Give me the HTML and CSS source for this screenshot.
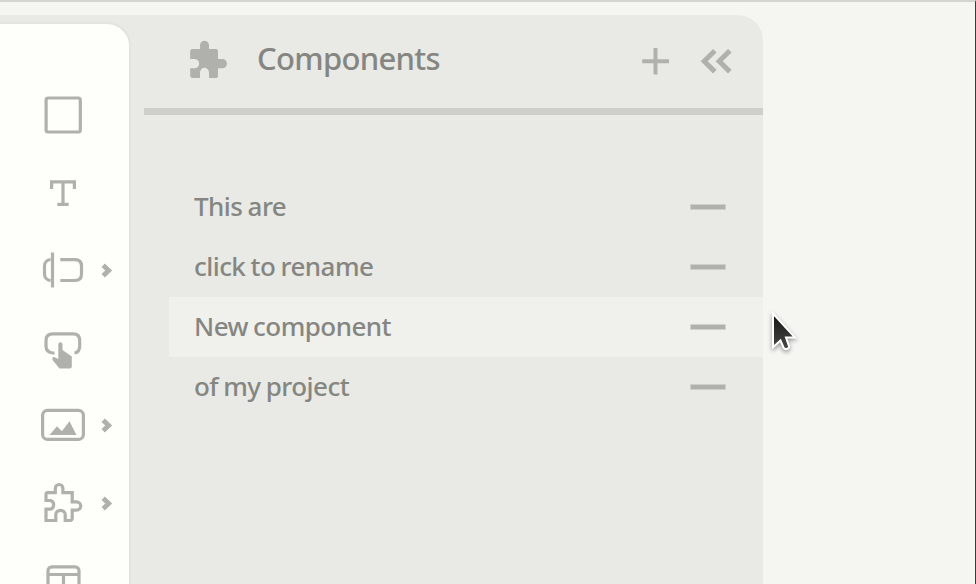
FILE: index.html
```html
<!DOCTYPE html>
<html lang="en">
<head>
<meta charset="utf-8">
<title>Components</title>
<link rel="stylesheet" href="styles.css">
</head>
<body>
<div class="app">
  <div class="panel">
    <nav class="toolbar">
      <svg class="tool" viewBox="0 76 129 78"><rect class="line" x="46.1" y="98" width="34.2" height="34" rx="2"/></svg>
      <svg class="tool" viewBox="0 154 129 78"><path class="line" d="M51.6 189V181.8H74.4V189M63 182V204.3M57.3 204.3H68.7"/></svg>
      <svg class="tool" viewBox="0 232 129 78"><path class="line" d="M52.5 252.5V287.5M50.5 259.5C47 259.8 44.5 262.500 44.500 266V274C44.500 277.500 47 280.300 50.500 280.600M60.300 259.600H75Q81.500 259.600 81.500 266V274Q81.500 280.500 75 280.500H60.300"/><path class="caret" d="M103.200 265.200L108.700 270.500L103.200 275.700"/></svg>
      <svg class="tool" viewBox="0 310 129 78"><path class="line" d="M54.500 353H53Q46 352.500 46 346V340.500Q46 333.800 53 333.800H73Q79.700 333.800 79.700 340.500V346Q79.700 352.300 74.500 353"/><path class="solid" d="M58.300 344.500Q58.300 342.200 60.400 342.200T62.500 344.500V350L71.800 356.500V366.500Q71.800 368.500 69.800 368.500H59.500L52.500 360Q51.700 357.600 53.500 356.700L58.300 359Z"/></svg>
      <svg class="tool" viewBox="0 388 129 78"><rect class="line" x="42.600" y="410.400" width="40.800" height="29" rx="5"/><path class="solid" d="M49.500 435L57 426.300L61.800 431.300L69.500 421.200L76.500 435Z"/><path class="caret" d="M103.200 420.200L108.700 425.500L103.200 430.700"/></svg>
      <svg class="tool" viewBox="0 466 129 78"><path class="line" d="M47.500 492.700H55.300V488.500A3.800 4 0 0 1 62.900 488.500V492.700H72.200V501.800H76.500A4.300 4.200 0 0 1 76.500 510.200H72.200V518Q72.200 520.500 70 520.500H65.200V514.500A4.700 4.200 0 0 0 55.800 514.500V520.500H46V509.200H50.500A4.300 4.500 0 0 0 50.500 500.500H46V495Q46 492.700 47.500 492.700Z"/><path class="caret" d="M103.200 498.300L108.700 503.600L103.200 508.800"/></svg>
      <svg class="tool" viewBox="0 544 129 78"><path class="line" d="M48 574.500H79M63.500 574.500V598"/><rect class="line" x="48" y="566.800" width="31" height="32" rx="4"/></svg>
    </nav>
    <section class="components">
      <header class="head">
        <svg class="puzzle" viewBox="190 40 38 39"><path class="solid" d="M192.500 49H200V45.500A4.500 4.800 0 0 1 209 45.500V49H216Q218 49 218 51V59H222.300A4.600 4.600 0 0 1 222.300 68.300H218V76Q218 78 216 78H209V72.500A4.500 4.700 0 0 0 200 72.500V78H192.500Q190.200 78 190.200 75.500V68.300H194.500A4.600 4.600 0 0 0 194.500 59H190.200V51.300Q190.200 49 192.500 49Z"/></svg>
        <h1 class="title">Components</h1>
        <svg class="actions" viewBox="640 40 94 42"><path class="plus" d="M642.200 61.200H669M655.500 48V74.500"/><path class="collapse" d="M714.800 50.800L704.200 61.200L714.800 71.600M729.800 50.800L719.200 61.200L729.800 71.600"/></svg>
      </header>
      <ul class="list">
        <li class="row"><span class="name">This are</span><i class="remove"></i></li>
        <li class="row"><span class="name">click to rename</span><i class="remove"></i></li>
        <li class="row active"><span class="name">New component</span><i class="remove"></i></li>
        <li class="row"><span class="name">of my project</span><i class="remove"></i></li>
      </ul>
    </section>
  </div>
  <svg class="cursor" viewBox="765 305 36 52">
    <defs><linearGradient id="ink" x2="0" y2="1"><stop stop-color="#151613"/><stop offset="1" stop-color="#484944"/></linearGradient></defs>
    <path class="pointer" d="M773 313.500V347.300L780.500 340.500L783.500 347.500Q785 350 787.500 348.700T788.800 345.500L786 337.500H795Z"/>
  </svg>
</div>
</body>
</html>
```
FILE: styles.css
```css
* { box-sizing: border-box; }
body {
  margin: 0;
  background: #f5f6f1;
  color: #858681;
  font-family: "Noto Sans", "Open Sans", sans-serif;
  overflow: hidden;
}
.app {
  position: relative;
  height: 584px;
  padding-top: 13px;
  border-top: 2px solid #d4d5d0;
  border-right: 1px solid #3a3b38;
  overflow: hidden;
}
.panel {
  display: flex;
  width: 763px;
  height: 569px;
  background: #e9eae6;
  border-top-right-radius: 25px;
  overflow: hidden;
}
.toolbar {
  flex: none;
  width: 131px;
  height: 640px;
  margin-top: 7px;
  padding-top: 52px;
  background: #fefffb;
  border-top: 2px solid #e2e4df;
  border-right: 2px solid #e2e4df;
  border-top-right-radius: 24px;
}
.tool { display: block; width: 129px; height: 78px; }
.line { fill: none; stroke: #b0b1ac; stroke-width: 3.2; }
.solid { fill: #b0b1ac; }
.caret { fill: none; stroke: #b0b1ac; stroke-width: 4.8; }
.components { flex: 1; margin-left: 13px; }
.head {
  display: flex;
  height: 100px;
  padding: 25px 29px 0 46px;
  border-bottom: 7px solid #cecfca;
}
.puzzle { flex: none; width: 38px; height: 39px; }
.title {
  margin: -3px 0 0 29px;
  font-size: 31px;
  font-weight: 500;
  line-height: 42px;
  letter-spacing: -0.7px;
}
.actions { width: 94px; height: 42px; margin-left: auto; }
.plus { fill: none; stroke: #b0b1ac; stroke-width: 4; }
.collapse { fill: none; stroke: #b0b1ac; stroke-width: 5; }
.list { margin: 62px 0 0 25px; padding: 0; list-style: none; }
.row {
  display: flex;
  align-items: center;
  justify-content: space-between;
  height: 60px;
  padding: 0 37px 0 25px;
}
.active { background: #f0f1ed; }
.name {
  padding-bottom: 2px;
  font-size: 26px;
  font-weight: 500;
  line-height: 36px;
  letter-spacing: -0.55px;
  word-spacing: -1px;
  white-space: nowrap;
}
.remove {
  width: 36px;
  height: 6px;
  background: #b0b1ac;
  background-clip: padding-box;
  border: 1px solid rgba(176, 177, 172, .5);
  border-radius: 1px;
}
.cursor {
  position: absolute;
  left: 765px;
  top: 303px;
  width: 36px;
  height: 52px;
  filter: drop-shadow(0 2px 2px rgba(0, 0, 0, .38));
}
.pointer { fill: url(#ink); stroke: #fff; stroke-width: 2; }
```
